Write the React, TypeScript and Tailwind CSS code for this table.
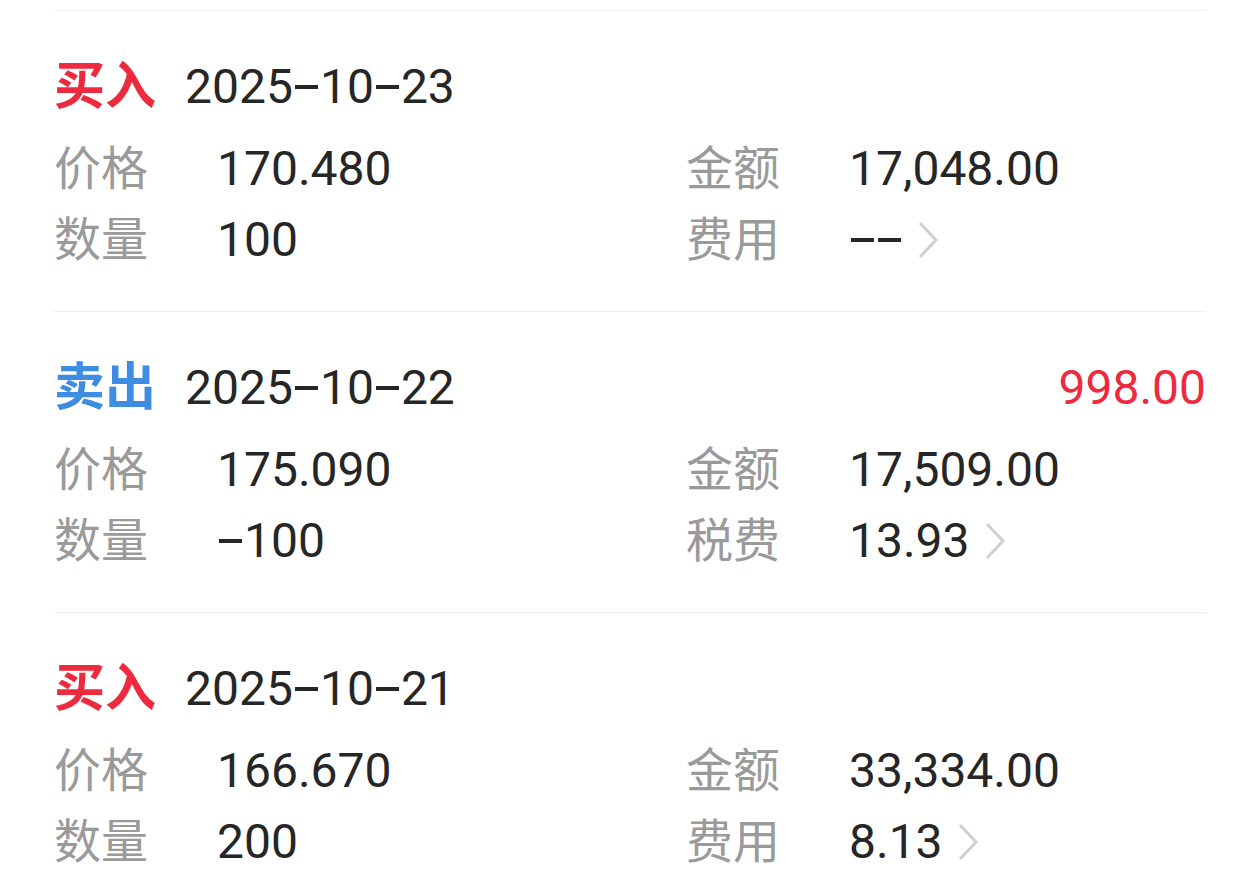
import React from "react";

type Rec = {
  type: "buy" | "sell";
  date: string;
  profit?: string;
  price: string;
  amount: string;
  qty: string;
  feeLabel: string;
  fee: string;
};

const records: Rec[] = [
  { type: "buy", date: "2025-10-23", price: "170.480", amount: "17,048.00", qty: "100", feeLabel: "费用", fee: "--" },
  { type: "sell", date: "2025-10-22", profit: "998.00", price: "175.090", amount: "17,509.00", qty: "-100", feeLabel: "税费", fee: "13.93" },
  { type: "buy", date: "2025-10-21", price: "166.670", amount: "33,334.00", qty: "200", feeLabel: "费用", fee: "8.13" },
];

function Dashed({ text }: { text: string }) {
  const parts = text.split("-");
  return (
    <>
      {parts.map((p, i) => (
        <React.Fragment key={i}>
          {i > 0 && (
            <span className="relative inline-block w-[27px] text-transparent">
              -
              <span className="absolute left-[2px] right-[2px] top-1/2 -translate-y-1/2 h-[4px] bg-[#262626]" />
            </span>
          )}
          {p}
        </React.Fragment>
      ))}
    </>
  );
}

function Chevron() {
  return (
    <svg width="24" height="40" viewBox="0 0 24 40" className="ml-[13px]">
      <polyline points="4,3 20,20 4,37" fill="none" stroke="#d0d0d0" strokeWidth="3" />
    </svg>
  );
}

function Cell({ label, value, chevron }: { label: string; value: string; chevron?: boolean }) {
  return (
    <div className="flex items-center h-[71px]">
      <span className="w-[163px] text-[#9a9a9a] text-[47px] leading-[71px]">{label}</span>
      <span className="text-[#262626] text-[48px] leading-[71px]">
        <Dashed text={value} />
      </span>
      {chevron && <Chevron />}
    </div>
  );
}

export default function App() {
  return (
    <div
      className="w-[1260px] h-[886px] bg-white overflow-hidden pt-[10px] px-[54px]"
      style={{ fontFamily: 'Roboto, "Noto Sans CJK SC", sans-serif' }}
    >
      {records.map((r, i) => (
        <div key={i} className="border-t border-[#ededed] h-[301px] pt-[46px]">
          <div className="flex items-center h-[60px]">
            <span
              className={`text-[51px] leading-[60px] font-bold ${r.type === "buy" ? "text-[#ee2a3e]" : "text-[#3f8de3]"}`}
            >
              {r.type === "buy" ? "买入" : "卖出"}
            </span>
            <span className="ml-[29px] text-[48px] leading-[60px] text-[#262626]">
              <Dashed text={r.date} />
            </span>
            {r.profit && (
              <span className="ml-auto text-[48px] leading-[60px] text-[#ee2a3e]">
                {r.profit}
              </span>
            )}
          </div>
          <div className="mt-[16px] flex">
            <div className="w-[632px] flex flex-col">
              <Cell label="价格" value={r.price} />
              <Cell label="数量" value={r.qty} />
            </div>
            <div className="flex flex-col">
              <Cell label="金额" value={r.amount} />
              <Cell label={r.feeLabel} value={r.fee} chevron />
            </div>
          </div>
        </div>
      ))}
    </div>
  );
}
